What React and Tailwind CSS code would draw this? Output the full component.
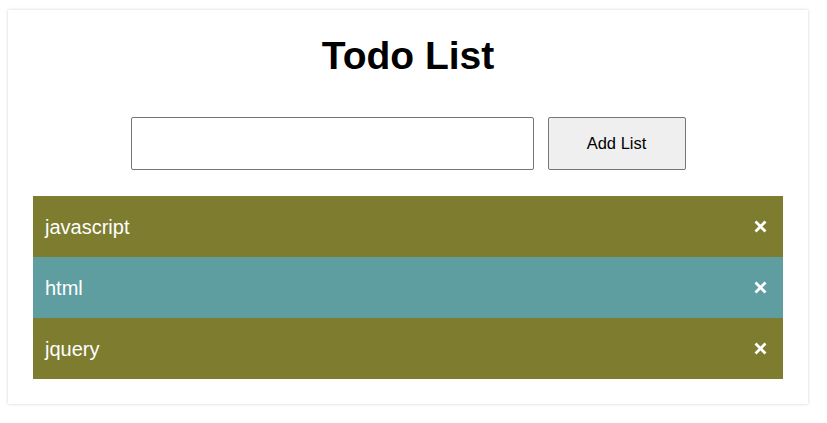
const todos = [
  { id: 1, text: "javascript", color: "bg-[#7d7c2f]" },
  { id: 2, text: "html", color: "bg-[#5f9ea0]" },
  { id: 3, text: "jquery", color: "bg-[#7d7c2f]" },
];

const CloseIcon = () => (
  <svg width="13" height="13" viewBox="0 0 13 13" className="block">
    <path d="M1.5 1.5L11.5 11.5M11.5 1.5L1.5 11.5" stroke="white" strokeWidth="2.8" />
  </svg>
);

export default function App() {
  return (
    <div className="min-h-screen bg-white pl-[8px] pt-[10px] font-['Liberation_Sans',Arial,sans-serif]">
      <div className="flex w-[800px] flex-col items-center bg-white px-[25px] pb-[25px] pt-[24px] shadow-[0_0_3px_rgba(0,0,0,0.18)]">
        <h1 className="text-[39px] font-bold leading-[44px] text-black">Todo List</h1>

        <div className="mt-[39px] flex gap-[14px]">
          <input
            type="text"
            className="h-[53px] w-[403px] rounded-[2px] border border-[#767676] bg-white px-2 outline-none"
          />
          <button className="h-[53px] w-[138px] rounded-[2px] border border-[#767676] bg-[#efefef] text-[16.5px] text-black">
            Add List
          </button>
        </div>

        <ul className="mt-[26px] w-full">
          {todos.map((todo) => (
            <li
              key={todo.id}
              className={`flex h-[61px] items-center justify-between pl-[12px] pr-[16px] text-[20px] text-white ${todo.color}`}
            >
              <span>{todo.text}</span>
              <CloseIcon />
            </li>
          ))}
        </ul>
      </div>
    </div>
  );
}
